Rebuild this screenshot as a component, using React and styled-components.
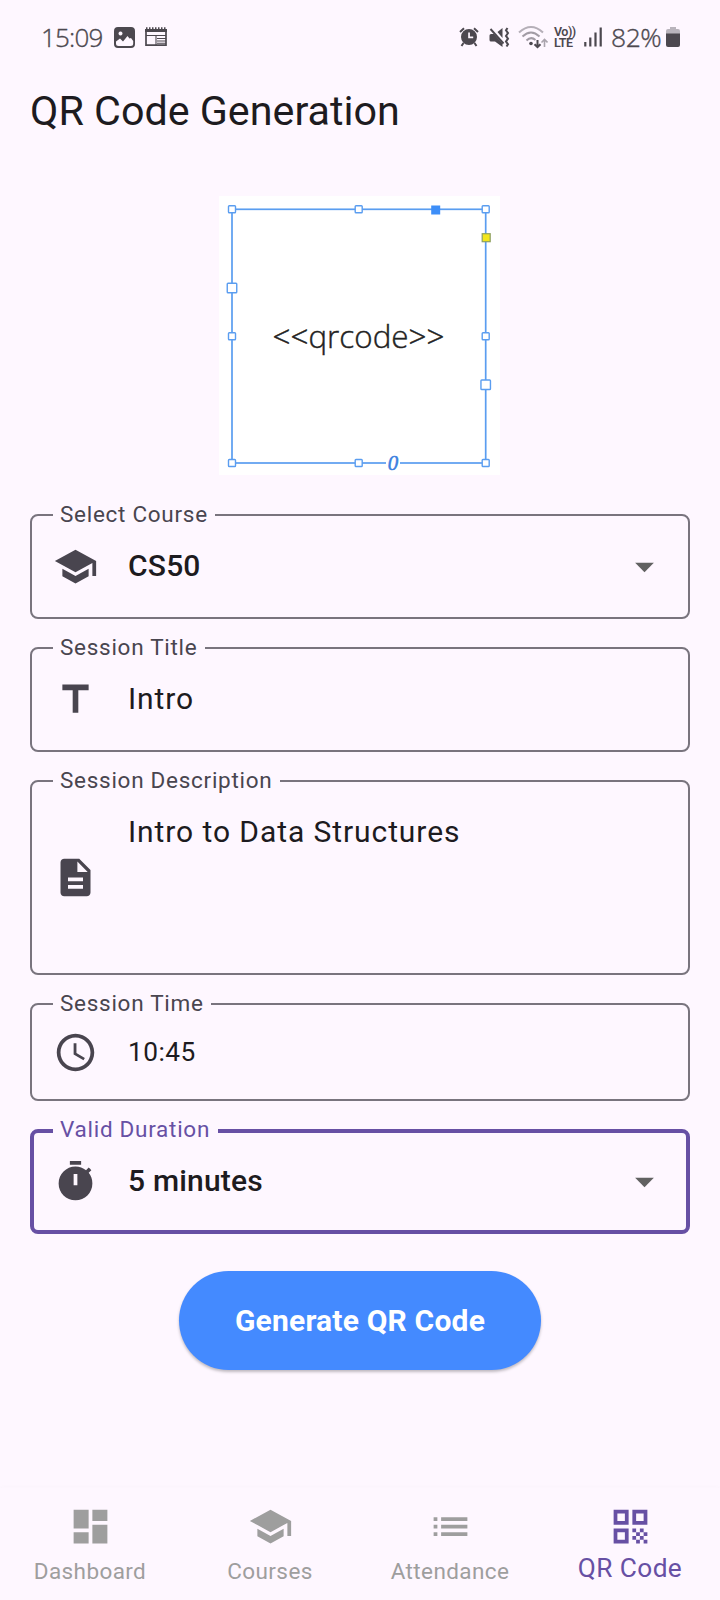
import React from "react";
import styled, { createGlobalStyle } from "styled-components";
import {
  MdSchool,
  MdTitle,
  MdDescription,
  MdAccessTime,
  MdArrowDropDown,
  MdDashboard,
  MdList,
  MdQrCode,
} from "react-icons/md";

const color = {
  surface: "#fef7ff",
  text: "#1d1b20",
  variant: "#49454f",
  outline: "#79747e",
  primary: "#6750a4",
  blue: "#448aff",
  muted: "#9e9e9e",
};

const GlobalStyle = createGlobalStyle`
  * { box-sizing: border-box; }
  body { margin: 0; background: ${color.surface}; font-family: Roboto, sans-serif; color: ${color.text}; }
  svg { display: block; flex: none; }
`;

const Screen = styled.div`
  width: 720px;
  height: 1600px;
  display: flex;
  flex-direction: column;
  overflow: hidden;
  background: ${color.surface};
`;

const StatusBar = styled.header`
  height: 74px;
  padding: 0 40px 0 41px;
  display: flex;
  align-items: center;
  justify-content: space-between;
  color: #4c484f;
`;

const StatusGroup = styled.div`
  display: flex;
  align-items: center;
`;

const StatusText = styled.span`
  width: ${(p) => p.$width}px;
  font-family: "Open Sans", "Noto Sans", sans-serif;
  font-weight: 300;
  -webkit-text-stroke: 0.35px currentColor;
  font-size: ${(p) => p.$size}px;
  letter-spacing: ${(p) => p.$spacing || 0}px;
  line-height: 36px;
  padding-bottom: 1px;
  white-space: nowrap;
`;

const AppBar = styled.div`
  height: 73px;
  padding-left: 30px;
  display: flex;
  align-items: center;
`;

const Title = styled.h1`
  margin: 0;
  font-size: 41.25px;
  font-weight: 400;
  line-height: 52px;
  white-space: nowrap;
`;

const Content = styled.main`
  flex: 1;
  padding: 49px 30px 0;
  display: flex;
  flex-direction: column;
  align-items: center;
`;

const CodePreview = styled.div`
  width: 281px;
  height: 279px;
  margin: 0 1px 1px 0;
  background: #fff;
`;

const Form = styled.div`
  width: 660px;
  margin-top: 38px;
  display: flex;
  flex-direction: column;
  gap: 28px;
`;

const FieldBox = styled.div`
  position: relative;
  height: ${(p) => p.$height}px;
  border: ${(p) => (p.$focused ? 4 : 2)}px solid ${(p) => (p.$focused ? color.primary : color.outline)};
  border-radius: 8px;
  padding: 0 ${(p) => (p.$focused ? 19 : 21)}px 0 ${(p) => (p.$focused ? 18 : 20)}px;
  display: flex;
  align-items: center;
  gap: 30px;
`;

const FieldLabel = styled.span`
  position: absolute;
  left: ${(p) => (p.$focused ? 18.5 : 20.5)}px;
  top: ${(p) => (p.$focused ? -17 : -15)}px;
  padding: 0 7.5px;
  background: ${color.surface};
  color: ${(p) => (p.$focused ? color.primary : color.variant)};
  font-size: 22.5px;
  line-height: 26px;
  letter-spacing: 0.72px;
  white-space: nowrap;
`;

const FieldIcon = styled.span`
  width: 45px;
  margin-left: 0.5px;
  color: ${color.variant};
`;

const FieldValue = styled.span`
  flex: 1;
  align-self: ${(p) => (p.$multiline ? "flex-start" : "center")};
  padding-top: ${(p) => (p.$multiline ? 32 : 0)}px;
  padding-bottom: ${(p) => (p.$multiline || p.$size ? 0 : 2)}px;
  margin-left: 0.5px;
  font-size: ${(p) => p.$size || 30}px;
  font-weight: ${(p) => (p.$strong ? 500 : 400)};
  letter-spacing: ${(p) => (p.$strong ? 0.19 : p.$size ? 0.45 : 0.92)}px;
  line-height: 36px;
  white-space: nowrap;
`;

const Arrow = styled.span`
  color: #616161;
`;

const GenerateButton = styled.button`
  width: 362px;
  height: 99px;
  margin-top: 37px;
  border: 0;
  border-radius: 50px;
  background: ${color.blue};
  color: #fff;
  font: 700 30px/36px Roboto, sans-serif;
  letter-spacing: 0.19px;
  box-shadow: 0 2px 3px rgba(0, 0, 0, 0.25);
`;

const NavBar = styled.nav`
  height: 112px;
  display: grid;
  grid-template-columns: repeat(4, 1fr);
  box-shadow: 0 -1px 4px rgba(100, 80, 120, 0.02);
`;

const NavItem = styled.div`
  display: flex;
  flex-direction: column;
  align-items: center;
  padding-top: 16px;
  color: ${(p) => (p.$active ? color.primary : color.muted)};
`;

const NavLabel = styled.span`
  margin-top: ${(p) => (p.$active ? 4 : 9)}px;
  font-size: ${(p) => (p.$active ? 26.25 : 22.5)}px;
  line-height: ${(p) => (p.$active ? 30 : 26)}px;
  letter-spacing: 0.4px;
  white-space: nowrap;
`;

const PictureIcon = () => (
  <svg width="21" height="21" viewBox="0 0 21 21">
    <path
      fillRule="evenodd"
      fill="currentColor"
      d="M4 0h13a4 4 0 0 1 4 4v13a4 4 0 0 1-4 4H4a4 4 0 0 1-4-4V4a4 4 0 0 1 4-4zM6.500 4.500a2 2 0 1 0 .01 0zM2 14.500L6 11.500l3 3L13.500 9l2 2.500L17 11l2.200 3V16.500a2.500 2.500 0 0 1-2.500 2.500H4.500A2.500 2.500 0 0 1 2 16.500z"
    />
  </svg>
);

const NewsIcon = () => (
  <svg width="22" height="20" viewBox="0 0 22 20" fill="none" stroke="currentColor">
    <path d="M1 3v15.200h20V3" strokeWidth="1.700" />
    <path d="M0 3.500h22" strokeWidth="3" />
    <path d="M1 1.200h21" strokeWidth="2" strokeDasharray="1.500 1.500" />
    <path d="M1 8.500h20M11 8.500v10M12 11.500h9M12 14h9M12 16.300h9" strokeWidth="1.100" />
  </svg>
);

const AlarmIcon = () => (
  <svg width="20" height="20" viewBox="0 0 20 20">
    <path
      fillRule="evenodd"
      fill="currentColor"
      d="M10 2a8 8 0 1 1 0 16 8 8 0 0 1 0-16zM9.200 5.500v5.700h5V9.600h-3.300V5.500z"
    />
    <path d="M1 5l4-3.700M19 5l-4-3.700M4.500 16L2.500 19M15.500 16l2 3" stroke="currentColor" strokeWidth="2" />
  </svg>
);

const MuteIcon = () => (
  <svg width="21" height="21" viewBox="0 0 21 21">
    <path fill="currentColor" d="M0.500 8.500A1.500 1.500 0 0 1 2 7h3l8.500 9.500V20L6 14.500H2A1.500 1.500 0 0 1 .5 13zM8.500 5L13.500 1v10z" />
    <path d="M1.500 2l13 14.500" stroke="currentColor" strokeWidth="1.900" />
    <path
      d="M18.500 1l-1.500 2.300 2 2.800-2 2.800 2 2.800-2 2.800 2 2.800-1.500 2.200"
      fill="none"
      stroke="currentColor"
      strokeWidth="2"
    />
  </svg>
);

const WifiIcon = () => (
  <svg width="30" height="24" viewBox="0 0 30 24" fill="none" strokeWidth="2">
    <path d="M1 7.500Q13 -3.500 25 7.500" stroke="#b5afb8" />
    <path d="M4.500 11.500Q13 3.500 21.500 11.500M8.500 15.500Q13 11 17.500 15" stroke="#a29ca5" />
    <circle cx="13" cy="18.500" r="1.800" fill="currentColor" />
    <path d="M19.500 15v7M16.500 19.200l3 3 3-3" stroke="currentColor" />
    <path d="M26.500 22v-7M23.500 17.500l3-3 3 3" stroke="#aaa4ad" strokeWidth="1.600" />
  </svg>
);

const VolteBadge = styled.span`
  width: 21px;
  font: 600 12.5px/11.5px Roboto, sans-serif;
  letter-spacing: -0.5px;
  white-space: nowrap;
`;

const SignalIcon = () => (
  <svg width="18" height="20" viewBox="0 0 18 20" stroke="currentColor" strokeWidth="2.200">
    <path d="M1.300 15v4.500M6.300 10.500v9M11.500 5.500v14M16.700.5v19" />
  </svg>
);

const BatteryIcon = () => (
  <svg width="14" height="20" viewBox="0 0 14 20">
    <path fill="#b9b4bc" d="M4 0h6v2h2a2 2 0 0 1 2 2v4H0V4a2 2 0 0 1 2-2h2z" />
    <path fill="currentColor" d="M0 6.500h14V18a2 2 0 0 1-2 2H2a2 2 0 0 1-2-2z" />
  </svg>
);

const TimerIcon = () => (
  <svg width="45" height="45" viewBox="0 0 24 24" fill="currentColor">
    <path d="M15 1H9v2h6V1zM19.030 7.390l1.420-1.420c-.43-.51-.9-.99-1.410-1.410l-1.420 1.420C16.070 4.740 14.120 4 12 4c-4.970 0-9 4.030-9 9s4.020 9 9 9 9-4.030 9-9c0-2.120-.74-4.070-1.970-5.610zM13 14h-2V8h2v6z" />
  </svg>
);

const Spacer = styled.span`
  width: ${(p) => p.$w}px;
`;

const handles = [
  [13, 13.3, 7], [139.7, 13.3, 7], [266.700, 13.3, 7],
  [13, 92, 9.500], [13, 140.3, 7],
  [266.700, 140.3, 7], [266.700, 188.7, 9.500],
  [13, 267, 7], [139.700, 267, 7], [266.700, 267, 7],
];

const PlaceholderArt = () => (
  <svg width="281" height="279" viewBox="0 0 281 279">
    <rect x="13" y="13.300" width="253.700" height="253.700" fill="none" stroke="#5a9df0" strokeWidth="1.700" />
    {handles.map(([x, y, s]) => (
      <rect key={`${x}-${y}`} x={x - s / 2} y={y - s / 2} width={s} height={s} rx="0.8" fill="#fff" stroke="#5a9df0" strokeWidth="1.400" />
    ))}
    <rect x="212.200" y="9.500" width="9" height="9" fill="#3d8ef8" />
    <rect x="263.200" y="37.700" width="8" height="8" fill="#f2e61c" stroke="#8d9f62" strokeWidth="1.200" />
    <rect x="167" y="264" width="14" height="6" fill="#fff" />
    <text x="174" y="273.500" textAnchor="middle" fontFamily="Liberation Serif, serif" fontStyle="italic" fontWeight="400" fontSize="21" fill="#3b7fe0" stroke="#3b7fe0" strokeWidth="0.500">0</text>
    <text x="139.500" y="152.300" textAnchor="middle" fontFamily="Open Sans, sans-serif" fontWeight="300" fontSize="31.400" fill="#222" stroke="#222" strokeWidth="0.400">
      {"<<qrcode>>"}
    </text>
  </svg>
);

function Field({ label, icon, value, height = 105, focused, strong, dropdown, multiline, size }) {
  return (
    <FieldBox $height={height} $focused={focused}>
      <FieldLabel $focused={focused}>{label}</FieldLabel>
      <FieldIcon>{icon}</FieldIcon>
      <FieldValue $strong={strong} $multiline={multiline} $size={size}>{value}</FieldValue>
      {dropdown && <Arrow><MdArrowDropDown size={45} /></Arrow>}
    </FieldBox>
  );
}

const tabs = [
  { label: "Dashboard", Icon: MdDashboard },
  { label: "Courses", Icon: MdSchool },
  { label: "Attendance", Icon: MdList },
  { label: "QR Code", Icon: MdQrCode, active: true },
];

export default function App() {
  return (
    <Screen>
      <GlobalStyle />
      <StatusBar>
        <StatusGroup>
          <StatusText $size={26} $spacing={-0.8} $width={62}>15:09</StatusText>
          <Spacer $w={11} />
          <PictureIcon />
          <Spacer $w={10} />
          <NewsIcon />
        </StatusGroup>
        <StatusGroup>
          <AlarmIcon />
          <Spacer $w={10} />
          <MuteIcon />
          <Spacer $w={8} />
          <WifiIcon />
          <Spacer $w={6} />
          <VolteBadge>Vo))<br />LTE</VolteBadge>
          <Spacer $w={9} />
          <SignalIcon />
          <Spacer $w={9} />
          <StatusText $size={26.5} $spacing={-0.5} $width={51}>82%</StatusText>
          <Spacer $w={4} />
          <BatteryIcon />
        </StatusGroup>
      </StatusBar>
      <AppBar>
        <Title>QR Code Generation</Title>
      </AppBar>
      <Content>
        <CodePreview>
          <PlaceholderArt />
        </CodePreview>
        <Form>
          <Field label="Select Course" icon={<MdSchool size={45} />} value="CS50" strong dropdown />
          <Field label="Session Title" icon={<MdTitle size={45} />} value="Intro" />
          <Field label="Session Description" icon={<MdDescription size={45} />} value="Intro to Data Structures" height={195} multiline />
          <Field label="Session Time" icon={<MdAccessTime size={45} />} value="10:45" height={98} size={26.25} />
          <Field label="Valid Duration" icon={<TimerIcon />} value="5 minutes" focused strong dropdown />
        </Form>
        <GenerateButton>Generate QR Code</GenerateButton>
      </Content>
      <NavBar>
        {tabs.map(({ label, Icon, active }) => (
          <NavItem key={label} $active={active}>
            <Icon size={45} />
            <NavLabel $active={active}>{label}</NavLabel>
          </NavItem>
        ))}
      </NavBar>
    </Screen>
  );
}
